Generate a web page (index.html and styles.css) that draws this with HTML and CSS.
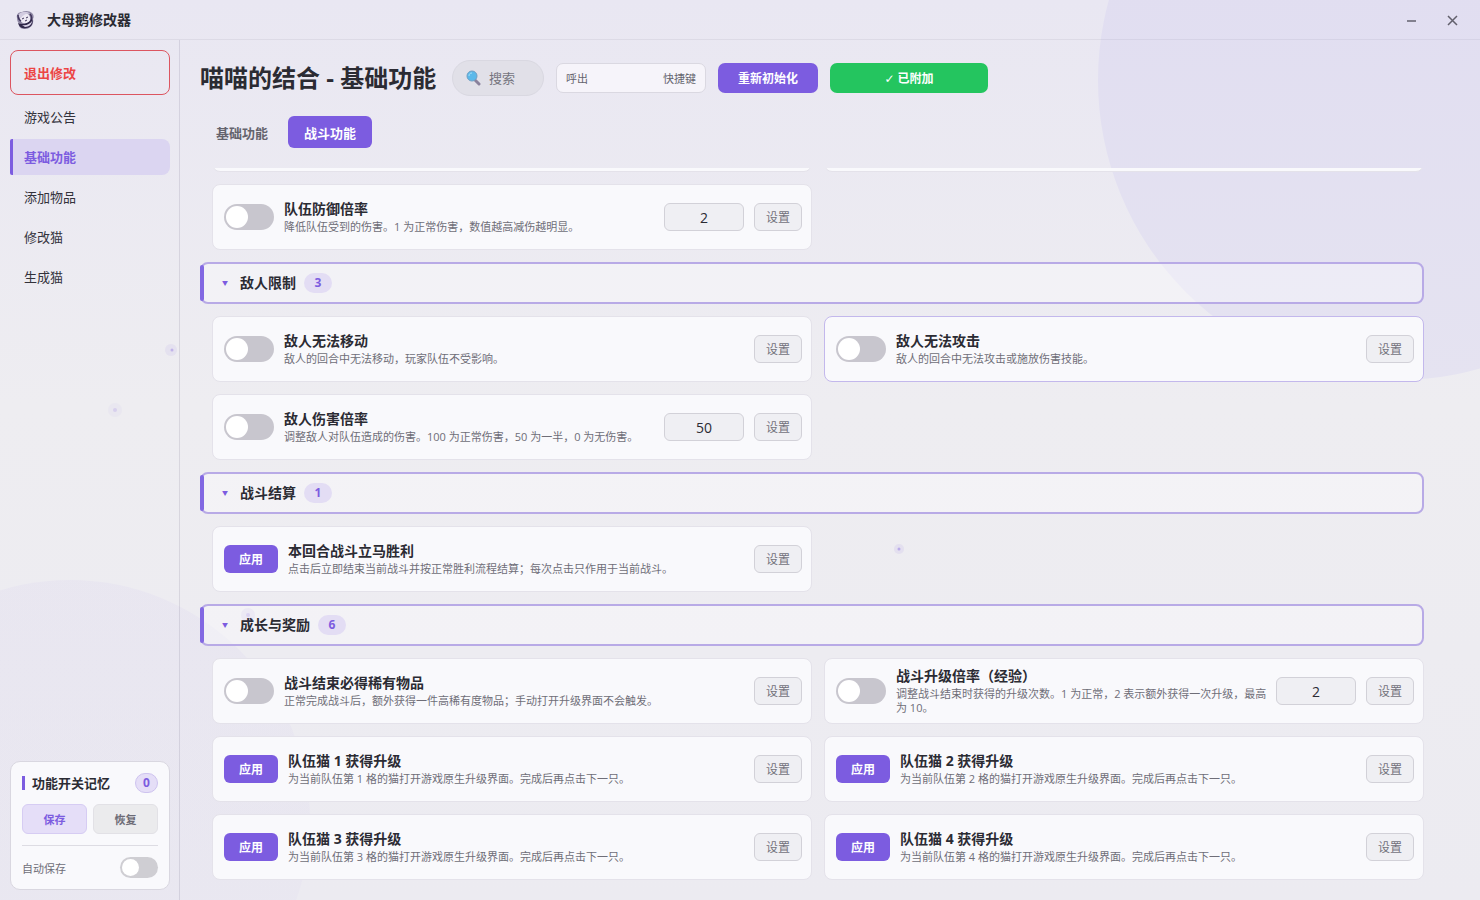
FILE: index.html
```html
<!DOCTYPE html>
<html lang="zh-CN">
<head>
  <meta charset="UTF-8" />
  <meta name="viewport" content="width=device-width, initial-scale=1.0"/>
  <title>大母鹅修改器</title>
  <link rel="stylesheet" href="styles.css">
</head>
<body>
  <div class="backdrop" aria-hidden="true">
    <div class="orb orb-top"></div>
    <div class="orb orb-bottom"></div>
  </div>

  <header class="titlebar">
    <svg class="logo" viewBox="0 0 20 20" aria-hidden="true">
      <path d="M1 8C0 4 3 2 6 2c3-2 8-1 10 1 2 2 2 4 1 6 1 4-1 9-7 10-4 0-7-1-7-4 1 0 2 0 1-1-2-1-3-3-3-6z" fill="#8d86a3"/>
      <path d="M4 8c0-4 6-6 9-3 2 3 2 7-2 8-4 1-7-1-7-5z" fill="#eeeaf4"/>
      <path d="M3 4c3-3 9-3 11 0-4-1-7 1-9 4-2 0-3-2-2-4z" fill="#d2cce0"/>
      <path d="M2 5c0 3 1 5 3 6M14 4c2 2 2 5 0 8" stroke="#40365c" stroke-width="1.5" fill="none"/>
      <path d="M6 9l2-1M10 8l2-1M9 11l2-1" stroke="#40365c" stroke-width="1" fill="none"/>
      <path d="M2 13c4 2 10 1 14-4 2 4-1 9-6 9-4 1-7-1-8-5z" fill="#2e2648"/>
      <path d="M6 15c4 1 8-1 10-4 0 3-3 6-7 6z" fill="#d9d3e8"/>
    </svg>
    <span class="app-name">大母鹅修改器</span>
    <button class="win-btn" aria-label="最小化">
      <svg viewBox="0 0 12 12"><path d="M2 7h9" /></svg>
    </button>
    <button class="win-btn" aria-label="关闭">
      <svg viewBox="0 0 12 12"><path d="M1 2l9 9M10 2l-9 9" /></svg>
    </button>
  </header>

  <div class="layout">
    <aside class="sidebar">
      <nav class="nav">
        <button class="exit-btn">退出修改</button>
        <a href="#notice">游戏公告</a>
        <a href="#basic" class="active">基础功能</a>
        <a href="#items">添加物品</a>
        <a href="#edit">修改猫</a>
        <a href="#create">生成猫</a>
      </nav>

      <div class="memory">
        <div class="memory-head">
          <span class="memory-title">功能开关记忆</span>
          <span class="memory-count">0</span>
        </div>
        <div class="memory-actions">
          <button class="save">保存</button>
          <button>恢复</button>
        </div>
        <div class="memory-auto">
          <label for="auto">自动保存</label>
          <input type="checkbox" class="switch small" id="auto" />
        </div>
      </div>
    </aside>

    <main class="main">
      <div class="toolbar">
        <h1>喵喵的结合 - 基础功能</h1>
        <label class="search">
          <svg viewBox="0 0 16 16" aria-hidden="true">
            <path d="M10 10l4 4" stroke="#8a819c" stroke-width="3" stroke-linecap="round"/>
            <circle cx="7" cy="6" r="5" fill="#5bb9ea" stroke="#6f9fc4" stroke-width="1"/>
            <path d="M4 6c0-2 1-3 3-3" stroke="#a9def7" stroke-width="1" fill="none"/>
          </svg>
          <input type="text" placeholder="搜索" aria-label="搜索" />
        </label>
        <button class="hotkey"><span>呼出</span><span>快捷键</span></button>
        <button class="init">重新初始化</button>
        <button class="attached"><span class="tick">✓</span> 已附加</button>
      </div>

      <div class="tabs">
        <button>基础功能</button>
        <button class="active">战斗功能</button>
      </div>

      <div class="content">
        <div class="grid">
          <div class="card"></div>
          <div class="card"></div>
          <div class="card">
            <input type="checkbox" class="switch" id="f1" />
            <div class="info">
              <label for="f1">队伍防御倍率</label>
              <p>降低队伍受到的伤害。1 为正常伤害，数值越高减伤越明显。</p>
            </div>
            <input type="text" class="value" value="2" aria-label="队伍防御倍率" />
            <button class="set">设置</button>
          </div>
        </div>

        <button class="section"><i>▼</i>敌人限制<span class="count">3</span></button>
        <div class="grid">
          <div class="card">
            <input type="checkbox" class="switch" id="f2" />
            <div class="info">
              <label for="f2">敌人无法移动</label>
              <p>敌人的回合中无法移动，玩家队伍不受影响。</p>
            </div>
            <button class="set">设置</button>
          </div>
          <div class="card current">
            <input type="checkbox" class="switch" id="f3" />
            <div class="info">
              <label for="f3">敌人无法攻击</label>
              <p>敌人的回合中无法攻击或施放伤害技能。</p>
            </div>
            <button class="set">设置</button>
          </div>
          <div class="card">
            <input type="checkbox" class="switch" id="f4" />
            <div class="info">
              <label for="f4">敌人伤害倍率</label>
              <p>调整敌人对队伍造成的伤害。100 为正常伤害，50 为一半，0 为无伤害。</p>
            </div>
            <input type="text" class="value" value="50" aria-label="敌人伤害倍率" />
            <button class="set">设置</button>
          </div>
        </div>

        <button class="section"><i>▼</i>战斗结算<span class="count">1</span></button>
        <div class="grid">
          <div class="card">
            <button class="apply">应用</button>
            <div class="info">
              <h3>本回合战斗立马胜利</h3>
              <p>点击后立即结束当前战斗并按正常胜利流程结算；每次点击只作用于当前战斗。</p>
            </div>
            <button class="set">设置</button>
          </div>
        </div>

        <button class="section"><i>▼</i>成长与奖励<span class="count">6</span></button>
        <div class="grid">
          <div class="card">
            <input type="checkbox" class="switch" id="f5" />
            <div class="info">
              <label for="f5">战斗结束必得稀有物品</label>
              <p>正常完成战斗后，额外获得一件高稀有度物品；手动打开升级界面不会触发。</p>
            </div>
            <button class="set">设置</button>
          </div>
          <div class="card">
            <input type="checkbox" class="switch" id="f6" />
            <div class="info">
              <label for="f6">战斗升级倍率（经验）</label>
              <p>调整战斗结束时获得的升级次数。1 为正常，2 表示额外获得一次升级，最高为 10。</p>
            </div>
            <input type="text" class="value" value="2" aria-label="战斗升级倍率" />
            <button class="set">设置</button>
          </div>
          <div class="card">
            <button class="apply">应用</button>
            <div class="info">
              <h3>队伍猫 1 获得升级</h3>
              <p>为当前队伍第 1 格的猫打开游戏原生升级界面。完成后再点击下一只。</p>
            </div>
            <button class="set">设置</button>
          </div>
          <div class="card">
            <button class="apply">应用</button>
            <div class="info">
              <h3>队伍猫 2 获得升级</h3>
              <p>为当前队伍第 2 格的猫打开游戏原生升级界面。完成后再点击下一只。</p>
            </div>
            <button class="set">设置</button>
          </div>
          <div class="card">
            <button class="apply">应用</button>
            <div class="info">
              <h3>队伍猫 3 获得升级</h3>
              <p>为当前队伍第 3 格的猫打开游戏原生升级界面。完成后再点击下一只。</p>
            </div>
            <button class="set">设置</button>
          </div>
          <div class="card">
            <button class="apply">应用</button>
            <div class="info">
              <h3>队伍猫 4 获得升级</h3>
              <p>为当前队伍第 4 格的猫打开游戏原生升级界面。完成后再点击下一只。</p>
            </div>
            <button class="set">设置</button>
          </div>
        </div>
      </div>
    </main>
  </div>

  <!-- floating particles -->
  <svg class="particles" aria-hidden="true">
    <g fill="#7c5ce0">
      <g opacity="0.6"><circle cx="171" cy="350" r="6" opacity="0.12"/><circle cx="172" cy="350" r="1.5" opacity="0.6"/></g>
      <g opacity="0.3"><circle cx="115" cy="410" r="7" opacity="0.12"/><circle cx="115" cy="410" r="2" opacity="0.6"/></g>
      <g opacity="0.6"><circle cx="899" cy="549" r="5" opacity="0.14"/><circle cx="899" cy="549" r="1.5" opacity="0.7"/></g>
      <g opacity="0.4"><circle cx="248" cy="615" r="7" opacity="0.14"/><circle cx="248" cy="615" r="2" opacity="0.4"/></g>
    </g>
  </svg>
</body>
</html>
```
FILE: styles.css
```css
* { box-sizing: border-box; }

body {
  font-family: "Open Sans", "Noto Sans CJK SC", sans-serif;
  background: linear-gradient(#e9e7f2, #eeedf1 45%, #ecebf1);
  color: #2b2b33;
  margin: 0;
  height: 100vh;
  display: flex;
  flex-direction: column;
  overflow: hidden;
}

button, input {
  font-family: inherit;
  margin: 0;
}

button {
  border: none;
  padding: 0;
  cursor: pointer;
}

h1, h3, p { margin: 0; }

/* background */
.backdrop {
  position: absolute;
  inset: 0;
  overflow: hidden;
  z-index: -1;
}

.orb {
  position: absolute;
  border-radius: 50%;
}

.orb-top {
  width: 600px;
  height: 600px;
  top: -220px;
  right: -218px;
  background: linear-gradient(#e1def1 35%, #e5e3f1);
}

.orb-bottom {
  width: 480px;
  height: 480px;
  left: -170px;
  bottom: -160px;
  background: linear-gradient(rgba(124, 92, 224, 0.04), rgba(124, 92, 224, 0.02));
}

.particles {
  position: absolute;
  inset: 0;
  width: 100%;
  height: 100%;
  pointer-events: none;
}

/* title bar */
.titlebar {
  display: flex;
  align-items: center;
  height: 40px;
  flex-shrink: 0;
  padding: 0 6px 0 16px;
  border-bottom: 1px solid rgba(60, 50, 90, 0.07);
}

.logo {
  width: 20px;
  height: 20px;
}

.app-name {
  flex: 1;
  margin-left: 11px;
  font-size: 14px;
  line-height: 20px;
  font-weight: bold;
}

.win-btn {
  width: 42px;
  height: 32px;
  background: none;
}

.win-btn svg {
  width: 12px;
  height: 12px;
  display: block;
  margin: 0 auto;
  fill: none;
  stroke: #62606c;
  stroke-width: 1.5;
}

.layout {
  flex: 1;
  display: flex;
  min-height: 0;
}

/* sidebar */
.sidebar {
  width: 180px;
  flex-shrink: 0;
  display: flex;
  flex-direction: column;
  justify-content: space-between;
  padding: 10px;
  padding-right: 9px;
  border-right: 1px solid rgba(60, 50, 90, 0.12);
}

.nav {
  display: flex;
  flex-direction: column;
  gap: 4px;
}

.nav a {
  height: 36px;
  line-height: 36px;
  padding-left: 14px;
  border-radius: 8px;
  font-size: 13px;
  color: #33323b;
  text-decoration: none;
}

.nav a.active {
  padding-left: 11px;
  border-left: 3px solid #7c5ce0;
  border-radius: 2px 8px 8px 2px;
  background: #dbd5f1;
  color: #7c5ce0;
  font-weight: bold;
}

.exit-btn {
  height: 45px;
  padding-left: 13px;
  text-align: left;
  border: 1px solid #dc5560;
  border-radius: 8px;
  background: none;
  color: #ec4545;
  font-size: 13px;
  font-weight: bold;
}

.memory {
  padding: 11px;
  border: 1px solid #d9d7e0;
  border-radius: 10px;
  background: #f9f9fc;
}

.memory-head {
  display: flex;
  align-items: center;
  justify-content: space-between;
  height: 20px;
}

.memory-title {
  border-left: 3px solid #7c5ce0;
  padding-left: 7px;
  font-size: 13px;
  line-height: 14px;
  font-weight: bold;
}

.memory-count {
  width: 23px;
  line-height: 18px;
  text-align: center;
  border: 1px solid #cec3ef;
  border-radius: 10px;
  background: #e5def7;
  color: #7c5ce0;
  font-size: 12px;
  font-weight: bold;
}

.memory-actions {
  display: flex;
  gap: 6px;
  margin-top: 11px;
  padding-bottom: 11px;
  border-bottom: 1px solid #dddce3;
}

.memory-actions button {
  flex: 1;
  height: 30px;
  border: 1px solid #e2e1e6;
  border-radius: 6px;
  background: #ebebed;
  color: #6b6a75;
  font-size: 11px;
  font-weight: bold;
}

.memory-actions .save {
  border-color: #d6ccf3;
  background: #e5def8;
  color: #7c5ce0;
}

.memory-auto {
  display: flex;
  align-items: center;
  justify-content: space-between;
  margin-top: 11px;
  font-size: 11px;
  color: #6f6e78;
}

/* switches */
.switch {
  appearance: none;
  flex-shrink: 0;
  width: 50px;
  height: 26px;
  padding: 2px;
  border-radius: 13px;
  background: #c8c6ce;
  cursor: pointer;
}

.switch::before {
  content: "";
  display: block;
  width: 22px;
  height: 22px;
  border-radius: 50%;
  background: white;
}

.switch:checked { background: #7c5ce0; }
.switch:checked::before { margin-left: auto; }

.switch.small {
  width: 38px;
  height: 21px;
  background: #cfced3;
}

.switch.small::before {
  width: 17px;
  height: 17px;
}

/* main */
.main {
  flex: 1;
  min-width: 0;
  display: flex;
  flex-direction: column;
  padding: 20px 56px 0 20px;
}

.toolbar {
  display: flex;
  align-items: center;
  gap: 12px;
  height: 36px;
}

.toolbar h1 {
  min-width: 240px;
  font-size: 24px;
  line-height: 36px;
  white-space: nowrap;
}

.search {
  display: flex;
  align-items: center;
  gap: 8px;
  width: 92px;
  height: 36px;
  padding: 0 12px;
  border: 1px solid #d9d8e1;
  border-radius: 18px;
  background: #e1e0e8;
}

.search svg {
  width: 16px;
  height: 16px;
  flex-shrink: 0;
}

.search input {
  width: 100%;
  min-width: 0;
  padding: 0;
  border: none;
  outline: none;
  background: none;
  font-size: 13px;
}

.search input::placeholder { color: #76757f; }

.toolbar button {
  height: 30px;
  border-radius: 7px;
  font-size: 12px;
  font-weight: bold;
  color: white;
}

.toolbar .hotkey {
  display: flex;
  align-items: center;
  justify-content: space-between;
  width: 150px;
  padding: 0 9px;
  border: 1px solid #dad8e1;
  background: #f6f4fa;
  color: #65646e;
  font-size: 11px;
  font-weight: normal;
}

.toolbar .init {
  width: 100px;
  background: #7c5ce0;
}

.toolbar .attached {
  width: 158px;
  background: #24c55f;
}

.tick { font-family: "DejaVu Sans", sans-serif; }

.tabs {
  display: flex;
  gap: 4px;
  margin: 20px 0;
}

.tabs button {
  height: 32px;
  padding: 0 16px;
  border-radius: 6px;
  background: none;
  color: #64636d;
  font-size: 13px;
  font-weight: bold;
}

.tabs .active {
  background: #7c5ce0;
  color: white;
}

/* the list stays pinned to its last rows */
.content {
  flex: 1;
  min-height: 0;
  display: flex;
  flex-direction: column;
  justify-content: flex-end;
  gap: 12px;
  padding-bottom: 20px;
  overflow: hidden;
}

.grid {
  display: grid;
  grid-template-columns: 1fr 1fr;
  gap: 12px;
  flex-shrink: 0;
  padding-left: 12px;
}

.card {
  display: flex;
  align-items: center;
  gap: 10px;
  min-height: 66px;
  padding: 8px 9px 8px 11px;
  border: 1px solid #e4e2ea;
  border-radius: 8px;
  background: #f9f9fc;
}

.card.current { border-color: #c3b8ec; }

.info {
  flex: 1;
  min-width: 0;
}

.info label, .info h3 {
  display: block;
  margin-bottom: 2px;
  font-size: 14px;
  line-height: 18px;
  font-weight: bold;
}

.info p {
  margin-right: -8px;
  font-size: 11px;
  line-height: 14px;
  color: #6f6e78;
}

.value, .set {
  height: 28px;
  flex-shrink: 0;
  border: 1px solid #d2d1d8;
  border-radius: 6px;
  background: #efeff3;
}

.value {
  width: 80px;
  padding: 0;
  text-align: center;
  color: #2b2b33;
  font-size: 14px;
}

.set {
  width: 48px;
  color: #73727c;
  font-size: 12px;
}

.apply {
  width: 54px;
  height: 28px;
  flex-shrink: 0;
  border-radius: 6px;
  background: #7c5ce0;
  color: white;
  font-size: 12px;
  font-weight: bold;
}

.section {
  position: relative;
  display: flex;
  align-items: center;
  flex-shrink: 0;
  height: 42px;
  padding-left: 20px;
  border: 2px solid #b8aae6;
  border-radius: 8px;
  background: rgba(255, 255, 255, 0.35);
  color: #2b2b33;
  font-size: 14px;
  line-height: 20px;
  font-weight: bold;
}

.section::before {
  content: "";
  position: absolute;
  left: -2px;
  top: 1px;
  bottom: 1px;
  width: 4px;
  border-radius: 2px;
  background: #8268e2;
}

.section i {
  width: 18px;
  color: #7c5ce0;
  font-size: 6px;
  font-style: normal;
  text-align: left;
}

.count {
  width: 28px;
  margin-left: 8px;
  line-height: 20px;
  border-radius: 10px;
  background: #e3ddf4;
  color: #7c5ce0;
  font-size: 12px;
}
```
